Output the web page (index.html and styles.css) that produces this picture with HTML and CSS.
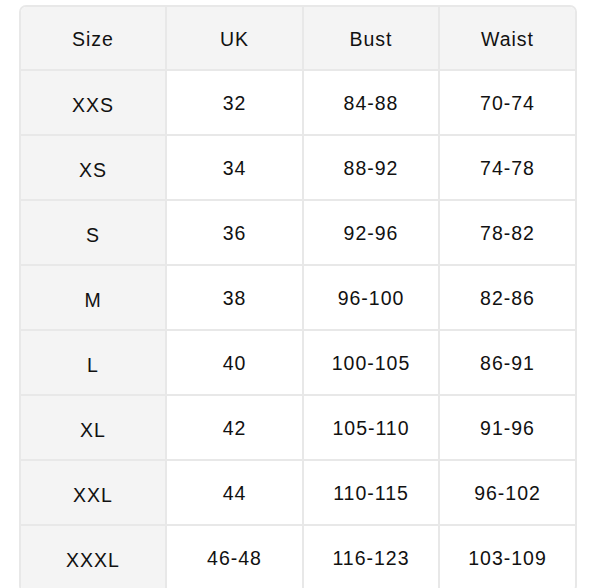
FILE: index.html
```html
<!DOCTYPE html>
<html>
<head>
<meta charset="utf-8">
<link rel="stylesheet" href="styles.css">
</head>
<body>
<div class="wrap">
<div class="chart">
<div class="cell head size">Size</div><div class="cell head">UK</div><div class="cell head">Bust</div><div class="cell head last">Waist</div>
<div class="cell size">XXS</div><div class="cell">32</div><div class="cell">84-88</div><div class="cell last">70-74</div>
<div class="cell size">XS</div><div class="cell">34</div><div class="cell">88-92</div><div class="cell last">74-78</div>
<div class="cell size">S</div><div class="cell">36</div><div class="cell">92-96</div><div class="cell last">78-82</div>
<div class="cell size">M</div><div class="cell">38</div><div class="cell">96-100</div><div class="cell last">82-86</div>
<div class="cell size">L</div><div class="cell">40</div><div class="cell">100-105</div><div class="cell last">86-91</div>
<div class="cell size">XL</div><div class="cell">42</div><div class="cell">105-110</div><div class="cell last">91-96</div>
<div class="cell size">XXL</div><div class="cell">44</div><div class="cell">110-115</div><div class="cell last">96-102</div>
<div class="cell size">XXXL</div><div class="cell">46-48</div><div class="cell">116-123</div><div class="cell last">103-109</div>
</div>
</div>
</body>
</html>
```

FILE: styles.css
```css
html, body {
  margin: 0;
  padding: 0;
  background: #ffffff;
}
.wrap {
  padding: 5px 0 0 19px;
}
.chart {
  box-sizing: border-box;
  width: 558px;
  display: grid;
  grid-template-columns: 146px 137px 136px 1fr;
  grid-auto-rows: 65px;
  grid-template-rows: 64px;
  border: 2px solid #e8e8e8;
  border-radius: 7px;
  overflow: hidden;
  font-family: "Liberation Sans", Arial, sans-serif;
  font-size: 19.5px;
  letter-spacing: 1px;
  color: #111111;
}
.cell {
  box-sizing: border-box;
  display: flex;
  align-items: center;
  justify-content: center;
  border-right: 2px solid #e8e8e8;
  border-bottom: 2px solid #e8e8e8;
  padding-top: 1px;
}
.cell.last {
  border-right: none;
}
.cell.head {
  background: #f4f4f4;
  padding-top: 3px;
}
.cell.size {
  background: #f4f4f4;
  padding-top: 5px;
}
.cell.head.size {
  padding-top: 3px;
}
```
